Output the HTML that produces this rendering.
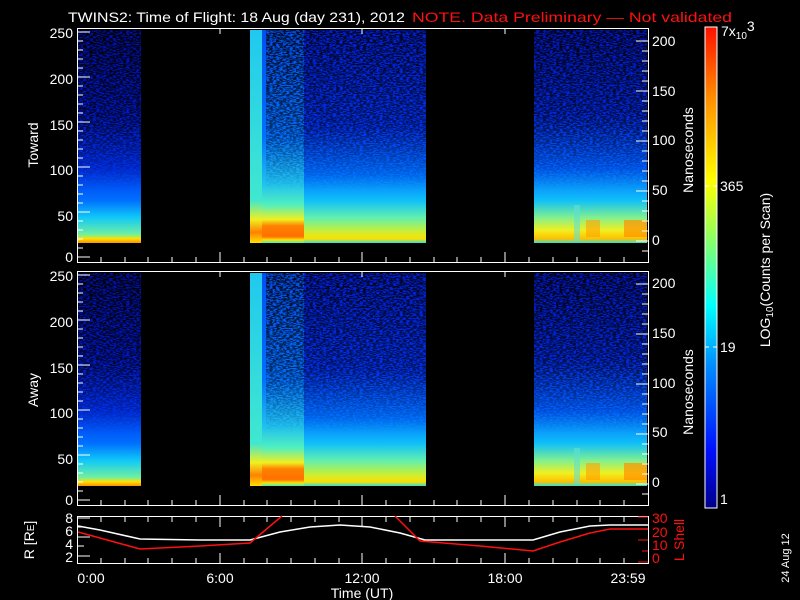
<!DOCTYPE html>
<html><head><meta charset="utf-8"><style>
html,body{margin:0;padding:0;background:#000;width:800px;height:600px;overflow:hidden}
svg{display:block}
text{font-family:"Liberation Sans",sans-serif;font-size:14px;fill:#fff}
</style></head><body>
<svg width="800" height="600" viewBox="0 0 800 600" xmlns="http://www.w3.org/2000/svg">
<defs>
<linearGradient id="g1" gradientUnits="userSpaceOnUse" x1="0" y1="30" x2="0" y2="243">
<stop offset="0" stop-color="#0010a0"/><stop offset="0.4" stop-color="#0018c0"/><stop offset="0.65" stop-color="#0030e8"/><stop offset="0.8" stop-color="#0070ff"/><stop offset="0.88" stop-color="#10c8f8"/><stop offset="0.96" stop-color="#70f0a0"/><stop offset="0.98" stop-color="#ffe000"/><stop offset="1" stop-color="#ff9000"/>
</linearGradient>
<linearGradient id="g2" gradientUnits="userSpaceOnUse" x1="0" y1="30" x2="0" y2="243">
<stop offset="0" stop-color="#0020d8"/><stop offset="0.45" stop-color="#0030e8"/><stop offset="0.68" stop-color="#0070ff"/><stop offset="0.8" stop-color="#10c0f8"/><stop offset="0.88" stop-color="#60f0b0"/><stop offset="0.94" stop-color="#c0f040"/><stop offset="0.98" stop-color="#ffe000"/><stop offset="1" stop-color="#30e0d0"/>
</linearGradient>
<linearGradient id="g2a" gradientUnits="userSpaceOnUse" x1="0" y1="30" x2="0" y2="243">
<stop offset="0" stop-color="#0050f0"/><stop offset="0.5" stop-color="#0070ff"/><stop offset="0.72" stop-color="#20c0f0"/><stop offset="0.82" stop-color="#50f0c0"/><stop offset="0.89" stop-color="#f0f020"/><stop offset="0.92" stop-color="#ff8000"/><stop offset="0.97" stop-color="#ff7000"/><stop offset="0.985" stop-color="#ffe000"/><stop offset="1" stop-color="#40f0c0"/>
</linearGradient>
<linearGradient id="g3" gradientUnits="userSpaceOnUse" x1="0" y1="30" x2="0" y2="243">
<stop offset="0" stop-color="#0018c0"/><stop offset="0.4" stop-color="#0028d8"/><stop offset="0.65" stop-color="#0060ff"/><stop offset="0.8" stop-color="#10c0f8"/><stop offset="0.88" stop-color="#80f090"/><stop offset="0.94" stop-color="#f0f020"/><stop offset="0.98" stop-color="#ffc000"/><stop offset="1" stop-color="#30e0d0"/>
</linearGradient>
<linearGradient id="cy" gradientUnits="userSpaceOnUse" x1="0" y1="30" x2="0" y2="243">
<stop offset="0" stop-color="#20c8f0"/><stop offset="0.8" stop-color="#40e8d0"/><stop offset="0.89" stop-color="#f0f020"/><stop offset="0.95" stop-color="#ff8000"/><stop offset="1" stop-color="#ffe000"/>
</linearGradient>
<linearGradient id="cb" x1="0" y1="1" x2="0" y2="0">
<stop offset="0" stop-color="#00008a"/><stop offset="0.12" stop-color="#0010ff"/><stop offset="0.3" stop-color="#0090ff"/><stop offset="0.42" stop-color="#00ffff"/><stop offset="0.58" stop-color="#a0ff50"/><stop offset="0.68" stop-color="#ffff00"/><stop offset="0.85" stop-color="#ff9000"/><stop offset="1" stop-color="#ff1000"/>
</linearGradient>
<filter id="nz" x="0" y="0" width="100%" height="100%">
<feTurbulence type="fractalNoise" baseFrequency="0.3 0.9" numOctaves="2" seed="3"/>
<feColorMatrix type="matrix" values="0 0 0 0 0  0 0 0 0 0  0 0 0 0 0  6 0 0 0 -2.4"/>
</filter>
<linearGradient id="fade" x1="0" y1="0" x2="0" y2="1"><stop offset="0" stop-color="#fff"/><stop offset="0.45" stop-color="#fff" stop-opacity="0.7"/><stop offset="0.75" stop-color="#fff" stop-opacity="0"/></linearGradient>
<mask id="fm" maskContentUnits="objectBoundingBox"><rect width="1" height="1" fill="url(#fade)"/></mask>
<g id="panel">
<rect x="78" y="30" width="63" height="213" fill="url(#g1)"/>
<rect x="262" y="30" width="42" height="213" fill="url(#g2a)"/>
<rect x="304" y="30" width="122" height="213" fill="url(#g2)"/>
<rect x="250" y="30" width="12" height="213" fill="url(#cy)"/>
<rect x="534" y="30" width="113" height="213" fill="url(#g3)"/>
<rect x="574" y="205" width="6" height="36" fill="#60e0d0" opacity="0.6"/>
<rect x="586" y="220" width="14" height="17" fill="#ffa000" opacity="0.6"/>
<rect x="624" y="220" width="23" height="17" fill="#ff9000" opacity="0.7"/>
<rect x="78" y="30" width="63" height="213" filter="url(#nz)" mask="url(#fm)"/>
<rect x="266" y="30" width="160" height="213" filter="url(#nz)" mask="url(#fm)" opacity="0.85"/>
<rect x="534" y="30" width="113" height="213" filter="url(#nz)" mask="url(#fm)" opacity="0.9"/>
<rect x="77.5" y="28.5" width="571" height="234" fill="none" stroke="#fff"/>
<path stroke="#fff" fill="none" d="M78 32h12M78 41h5M78 50h5M78 59h5M78 68h5M78 77h12M78 86h5M78 95h5M78 104h5M78 113h5M78 122h12M78 131h5M78 140h5M78 149h5M78 158h5M78 167h12M78 176h5M78 185h5M78 194h5M78 203h5M78 212h12M78 221h5M78 230h5M78 239h5M78 248h5M78 257h12
M648 41h-12M648 51h-6M648 61h-6M648 71h-6M648 81h-6M648 91h-12M648 101h-6M648 111h-6M648 121h-6M648 131h-6M648 141h-12M648 151h-6M648 161h-6M648 171h-6M648 181h-6M648 191h-12M648 201h-6M648 211h-6M648 221h-6M648 231h-6M648 241h-12M648 251h-6
M101 262v-5M125 262v-5M148 262v-5M172 262v-5M196 262v-5M220 262v-10M244 262v-5M267 262v-5M291 262v-5M315 262v-5M339 262v-5M362 262v-10M386 262v-5M410 262v-5M434 262v-5M457 262v-5M481 262v-5M505 262v-10M529 262v-5M553 262v-5M577 262v-5M600 262v-5M624 262v-5
M220 28v6M362 28v6M505 28v6"/>
</g>
</defs>
<text x="68" y="22" textLength="337" lengthAdjust="spacingAndGlyphs">TWINS2: Time of Flight: 18 Aug (day 231), 2012</text>
<text x="412" y="22" style="fill:#ff1010" textLength="320" lengthAdjust="spacingAndGlyphs">NOTE. Data Preliminary — Not validated</text>
<use href="#panel"/>
<use href="#panel" transform="translate(0,243)"/>
<g text-anchor="end">
<text x="73" y="38">250</text><text x="73" y="84">200</text><text x="73" y="130">150</text><text x="73" y="175">100</text><text x="73" y="221">50</text><text x="73" y="262">0</text>
<text x="73" y="281">250</text><text x="73" y="327">200</text><text x="73" y="373">150</text><text x="73" y="418">100</text><text x="73" y="464">50</text><text x="73" y="505">0</text>
</g>
<g>
<text x="652" y="46">200</text><text x="652" y="96">150</text><text x="652" y="145">100</text><text x="652" y="195">50</text><text x="652" y="245">0</text>
<text x="652" y="288">200</text><text x="652" y="338">150</text><text x="652" y="388">100</text><text x="652" y="437">50</text><text x="652" y="487">0</text>
</g>
<text transform="translate(38,145) rotate(-90)" text-anchor="middle">Toward</text>
<text transform="translate(38,390) rotate(-90)" text-anchor="middle">Away</text>
<text transform="translate(693,150) rotate(-90)" text-anchor="middle">Nanoseconds</text>
<text transform="translate(693,392) rotate(-90)" text-anchor="middle">Nanoseconds</text>
<rect x="705" y="27" width="12" height="481" fill="url(#cb)" stroke="#fff"/>
<path stroke="#fff" d="M705 186h4M713 186h4M705 347h4M713 347h4"/>
<text x="721" y="36">7x<tspan style="font-size:10px" dy="3">10</tspan><tspan dy="-8">3</tspan></text>
<text x="720" y="191">365</text><text x="720" y="352">19</text><text x="720" y="504">1</text>
<text transform="translate(770,270) rotate(-90)" text-anchor="middle">LOG<tspan style="font-size:10px" dy="3">10</tspan><tspan dy="-3">(Counts per Scan)</tspan></text>
<rect x="77.5" y="516.5" width="571" height="47" fill="none" stroke="#fff"/>
<path stroke="#fff" d="M78 518h12M78 527h6M78 537h12M78 546h6M78 556h12
M101 517v5M125 517v5M148 517v5M172 517v5M196 517v5M220 517v10M244 517v5M267 517v5M291 517v5M315 517v5M339 517v5M362 517v10M386 517v5M410 517v5M434 517v5M457 517v5M481 517v5M505 517v10M529 517v5M553 517v5M577 517v5M600 517v5M624 517v5
M101 563v-5M125 563v-5M148 563v-5M172 563v-5M196 563v-5M220 563v-10M244 563v-5M267 563v-5M291 563v-5M315 563v-5M339 563v-5M362 563v-10M386 563v-5M410 563v-5M434 563v-5M457 563v-5M481 563v-5M505 563v-10M529 563v-5M553 563v-5M577 563v-5M600 563v-5M624 563v-5"/>
<path stroke="#ff1010" d="M648 517h-10M648 529h-6M648 540h-10M648 551h-6M648 562h-10"/>
<polyline fill="none" stroke="#fff" stroke-width="1.5" points="78,526 100,530 140,539 200,540 250,540 280,532 310,527 340,525 370,527 400,533 425,540 480,540 533,540 560,532 590,526 610,525 648,525"/>
<polyline fill="none" stroke="#ff1010" stroke-width="1.5" points="78,532 100,538 140,549 200,546 250,543 282,516"/>
<polyline fill="none" stroke="#ff1010" stroke-width="1.5" points="395,516 420,541 480,546 533,551 560,542 590,533 610,529 648,529"/>
<g text-anchor="end"><text x="73" y="523">8</text><text x="73" y="536">6</text><text x="73" y="549">4</text><text x="73" y="562">2</text></g>
<text transform="translate(34,540) rotate(-90)" text-anchor="middle">R [R<tspan style="font-size:10px">E</tspan>]</text>
<text x="652" y="523" style="fill:#ff1010">30</text><text x="652" y="537" style="fill:#ff1010">20</text><text x="652" y="550" style="fill:#ff1010">10</text><text x="652" y="563" style="fill:#ff1010">0</text>
<text transform="translate(684,540) rotate(-90)" text-anchor="middle" style="fill:#ff1010">L Shell</text>
<g text-anchor="middle"><text x="91" y="583">0:00</text><text x="220" y="583">6:00</text><text x="362" y="583">12:00</text><text x="505" y="583">18:00</text><text x="628" y="583">23:59</text>
<text x="362" y="598">Time (UT)</text></g>
<text transform="translate(789,558) rotate(-90)" text-anchor="middle" style="font-size:11px">24 Aug 12</text>
</svg>
</body></html>
